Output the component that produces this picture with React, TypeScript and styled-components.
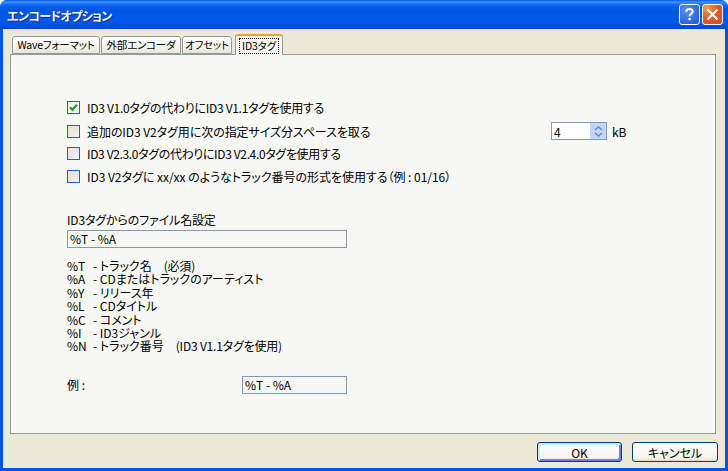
import styled, { createGlobalStyle } from 'styled-components';

const GlobalStyle = createGlobalStyle`
  html, body {
    margin: 0;
    padding: 0;
    background: #ffffff;
  }
  * {
    box-sizing: border-box;
  }
`;

const FONT = '"Noto Sans CJK JP", "Liberation Sans", sans-serif';

const tabs = [
  { label: 'Waveフォーマット', width: 88 },
  { label: '外部エンコーダ', width: 80 },
  { label: 'オフセット', width: 50 },
  { label: 'ID3タグ', width: 48, active: true },
];

const options = [
  { label: 'ID3 V1.0タグの代わりにID3 V1.1タグを使用する', checked: true, tracking: -0.3 },
  { label: '追加のID3 V2タグ用に次の指定サイズ分スペースを取る', size: true, tracking: -0.07 },
  { label: 'ID3 V2.3.0タグの代わりにID3 V2.4.0タグを使用する', tracking: -0.36 },
  { label: 'ID3 V2タグに xx/xx のようなトラック番号の形式を使用する（例 : 01/16）', tracking: -0.03 },
];

const legend = [
  { code: '%T', text: '- トラック名', note: '(必須)' },
  { code: '%A', text: '- CDまたはトラックのアーティスト' },
  { code: '%Y', text: '- リリース年' },
  { code: '%L', text: '- CDタイトル' },
  { code: '%C', text: '- コメント' },
  { code: '%I', text: '- ID3ジャンル' },
  { code: '%N', text: '- トラック番号', note: '(ID3 V1.1タグを使用)' },
];

const App = () => {
  return (
    <Window>
      <GlobalStyle />
      <TitleBar>
        <Title>エンコードオプション</Title>
        <CaptionButtons>
          <HelpButton>
            <svg width="21" height="21" viewBox="0 0 21 21">
              <path
                d="M7 7.5C7 5.5 8.5 4.5 10.5 4.5S14 5.7 14 7.3C14 9.8 10.6 9.8 10.6 12.5"
                fill="none"
                stroke="#fff"
                strokeWidth="2.2"
              />
              <rect x="9.4" y="14.2" width="2.4" height="2.6" fill="#fff" />
            </svg>
          </HelpButton>
          <CloseButton>
            <svg width="21" height="21" viewBox="0 0 21 21">
              <path d="M5 5L16 16M16 5L5 16" fill="none" stroke="#fff" strokeWidth="2.4" />
            </svg>
          </CloseButton>
        </CaptionButtons>
      </TitleBar>
      <Body>
        <TabStrip>
          {tabs.map((tab) => (
            <Tab key={tab.label} $active={tab.active} $width={tab.width}>
              {tab.active ? <FocusedLabel>{tab.label}</FocusedLabel> : tab.label}
            </Tab>
          ))}
        </TabStrip>
        <Panel>
          <OptionList>
            {options.map((option) => (
              <OptionRow key={option.label}>
                <CheckBox $checked={option.checked}>
                  {option.checked && (
                    <svg width="11" height="11" viewBox="0 0 11 11">
                      <path d="M2 5.2L4.5 7.8L9 2.8" fill="none" stroke="#21a121" strokeWidth="2.2" />
                    </svg>
                  )}
                </CheckBox>
                <OptionLabel $tracking={option.tracking}>{option.label}</OptionLabel>
                {option.size && (
                  <SizeField>
                    <SpinBox>
                      <span>4</span>
                      <SpinButtons>
                        <svg width="15" height="15" viewBox="0 0 15 15">
                          <path d="M4 6L7.5 3L11 6" fill="none" stroke="#6f8fb4" strokeWidth="1.6" />
                          <path d="M4 9L7.5 12L11 9" fill="none" stroke="#6f8fb4" strokeWidth="1.6" />
                        </svg>
                      </SpinButtons>
                    </SpinBox>
                    <Unit>kB</Unit>
                  </SizeField>
                )}
              </OptionRow>
            ))}
          </OptionList>
          <FieldLabel>ID3タグからのファイル名設定</FieldLabel>
          <TextBox $width={280}>%T - %A</TextBox>
          <Legend>
            {legend.map((row) => (
              <LegendRow key={row.code}>
                <LegendCode>{row.code}</LegendCode>
                <span>{row.text}</span>
                {row.note && <LegendNote>{row.note}</LegendNote>}
              </LegendRow>
            ))}
          </Legend>
          <ExampleRow>
            <ExampleLabel>例 :</ExampleLabel>
            <TextBox $width={105}>%T - %A</TextBox>
          </ExampleRow>
        </Panel>
        <Footer>
          <PushButton $primary>OK</PushButton>
          <PushButton>キャンセル</PushButton>
        </Footer>
      </Body>
    </Window>
  );
};

export default App;

const Window = styled.div`
  width: 728px;
  height: 471px;
  display: flex;
  flex-direction: column;
  overflow: hidden;
  border-radius: 7px 7px 0 0;
  background: #0054e3;
  padding: 0 3px 3px;
  font-family: ${FONT};
  font-feature-settings: 'palt';
  font-size: 12px;
  color: #000000;
`;

const TitleBar = styled.div`
  height: 29px;
  flex: none;
  margin: 0 -3px;
  padding: 0 5px 0 7px;
  display: flex;
  align-items: center;
  justify-content: space-between;
  background: linear-gradient(
    to bottom,
    #0a5ae0 0,
    #3d95ff 2px,
    #0a66f2 5px,
    #0054e3 10px,
    #0058ea 22px,
    #0048d0 29px
  );
`;

const Title = styled.div`
  color: #ffffff;
  font-size: 12px;
  font-weight: 700;
  letter-spacing: -0.6px;
  padding-top: 1px;
  text-shadow: 1px 1px 0 #0a2a8a;
`;

const CaptionButtons = styled.div`
  display: flex;
  gap: 2px;
`;

const HelpButton = styled.div`
  width: 21px;
  height: 21px;
  border: 1px solid #ffffff;
  border-radius: 3px;
  display: flex;
  align-items: center;
  justify-content: center;
  background: radial-gradient(circle at 35% 30%, #5c93ee, #2b63d8 75%);
`;

const CloseButton = styled(HelpButton)`
  background: radial-gradient(circle at 20% 15%, #f0a050, #dd5a2c 50%, #cf4e22);
`;

const Body = styled.div`
  flex: 1;
  min-height: 0;
  display: flex;
  flex-direction: column;
  background: #ece9d8;
  padding: 5px 7px 0;
`;

const TabStrip = styled.div`
  display: flex;
  align-items: flex-end;
  height: 20px;
  flex: none;
  padding-left: 2px;
  gap: 1px;
  position: relative;
  z-index: 1;
`;

const Tab = styled.div<{ $active?: boolean; $width: number }>`
  width: ${(p) => p.$width}px;
  height: ${(p) => (p.$active ? 21 : 18)}px;
  margin-bottom: ${(p) => (p.$active ? -1 : 0)}px;
  margin-left: ${(p) => (p.$active ? 2 : 0)}px;
  display: flex;
  align-items: center;
  justify-content: center;
  white-space: nowrap;
  font-size: 10.5px;
  letter-spacing: -0.2px;
  line-height: 14px;
  border: 1px solid #919b9c;
  border-bottom: ${(p) => (p.$active ? 'none' : '1px solid #919b9c')};
  border-top: ${(p) => (p.$active ? '2px solid #e8a33d' : '1px solid #919b9c')};
  border-radius: 3px 3px 0 0;
  background: ${(p) =>
    p.$active ? '#f7f7f4' : 'linear-gradient(to bottom, #ffffff, #f3f2ea 70%, #e6e4d6)'};
`;

const FocusedLabel = styled.span`
  outline: 1px dotted #000000;
  padding: 0 2px;
  line-height: 14px;
`;

const Panel = styled.div`
  width: 706px;
  height: 380px;
  flex: none;
  display: flex;
  flex-direction: column;
  background: #f7f7f4;
  border: 1px solid #919b9c;
  padding: 44px 0 0 56px;
`;

const OptionList = styled.div`
  display: flex;
  flex-direction: column;
  gap: 7px;
`;

const OptionRow = styled.div`
  height: 16px;
  display: grid;
  grid-template-columns: 13px 471px auto;
  align-items: center;
  justify-content: start;
`;

const CheckBox = styled.div<{ $checked?: boolean }>`
  width: 13px;
  height: 13px;
  display: flex;
  align-items: center;
  justify-content: center;
  border: 1px solid #1c5fe0;
  background: ${(p) =>
    p.$checked
      ? '#f4f4f0'
      : 'linear-gradient(135deg, #e8e5d6 0%, #ece9dc 55%, #f8f7f2 100%)'};
`;

const OptionLabel = styled.span<{ $tracking: number }>`
  margin-left: 7px;
  white-space: nowrap;
  letter-spacing: ${(p) => p.$tracking}px;
`;

const SizeField = styled.div`
  display: flex;
  align-items: center;
`;

const SpinBox = styled.div`
  width: 56px;
  height: 18px;
  display: flex;
  align-items: center;
  justify-content: space-between;
  background: #ffffff;
  border: 1px solid #7f9db9;
  padding-left: 2px;
`;

const SpinButtons = styled.div`
  width: 16px;
  height: 16px;
  display: flex;
  align-items: center;
  justify-content: center;
  background: #c3d5fb;
`;

const Unit = styled.span`
  margin-left: 5px;
`;

const FieldLabel = styled.div`
  margin-top: 29px;
  height: 17px;
  line-height: 14px;
  letter-spacing: -0.15px;
`;

const TextBox = styled.div<{ $width: number }>`
  width: ${(p) => p.$width}px;
  height: 18px;
  line-height: 16px;
  border: 1px solid #7f9db9;
  background: #f7f7f4;
  padding-left: 2px;
`;

const Legend = styled.div`
  margin-top: 11px;
  display: flex;
  flex-direction: column;
`;

const LegendRow = styled.div`
  display: flex;
  height: 13.4px;
  line-height: 13.4px;
  white-space: nowrap;
`;

const LegendCode = styled.span`
  width: 26px;
  flex: none;
`;

const LegendNote = styled.span`
  margin-left: 12px;
  letter-spacing: -0.2px;
`;

const ExampleRow = styled.div`
  margin-top: 23px;
  display: flex;
  align-items: center;
`;

const ExampleLabel = styled.span`
  width: 175px;
  flex: none;
`;

const Footer = styled.div`
  flex: 1;
  display: flex;
  justify-content: flex-end;
  align-items: flex-start;
  gap: 10px;
  padding-top: 8px;
`;

const PushButton = styled.div<{ $primary?: boolean }>`
  width: ${(p) => (p.$primary ? 85 : 86)}px;
  height: 20px;
  display: flex;
  align-items: center;
  justify-content: center;
  border: 1px solid #003c74;
  border-radius: 3px;
  background: linear-gradient(to bottom, #ffffff, #f4f4ef 85%, #dcd8c8);
  box-shadow: ${(p) =>
    p.$primary ? 'inset 2px 2px 0 #cee7ff, inset -2px -2px 0 #6982ee' : 'none'};
`;
